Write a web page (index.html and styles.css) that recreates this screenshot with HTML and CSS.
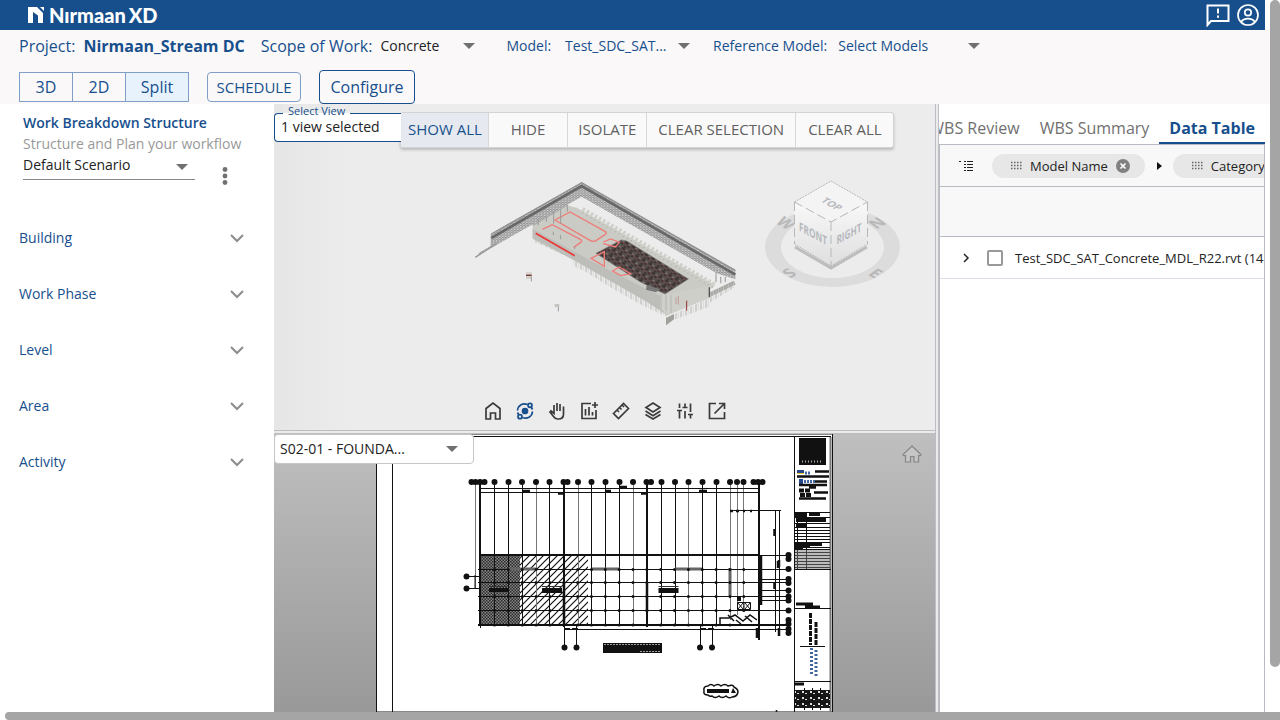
FILE: index.html
```html
<!DOCTYPE html>
<html lang="en">
<head>
<meta charset="utf-8">
<title>NirmaanXD</title>
<link rel="stylesheet" href="styles.css">
</head>
<body>
<div class="app">
  <div class="page">
    <header class="topbar">
      <div class="brand">
        <svg width="16" height="16" viewBox="0 0 16 16" aria-hidden="true"><path fill="#fff" d="M0 0h9l6 6v10h-5V8.500L5 5V16H0zM12 0h4v4z"/></svg>
        <span class="brand-name">Nırmaan<span class="brand-xd">XD</span></span>
      </div>
      <div class="top-actions">
        <button class="icon-btn" aria-label="Feedback"><svg width="24" height="24" viewBox="0 0 24 24" fill="none" stroke="#fff" stroke-width="2"><path d="M1.500 22V2.500h21V18H5z"/><path d="M12 5.500v5M12 12.500v2.200"/></svg></button>
        <button class="icon-btn" aria-label="Account"><svg width="24" height="24" viewBox="0 0 24 24" fill="none" stroke="#fff" stroke-width="1.700"><circle cx="12" cy="12" r="10"/><circle cx="12" cy="9.500" r="3.200"/><path d="M5 19c3-4.500 11-4.500 14 0"/></svg></button>
      </div>
    </header>

    <section class="subbar">
      <div class="info-row">
        <span class="big">Project:</span><strong class="project">Nirmaan_Stream DC</strong>
        <label class="big" for="scope">Scope of Work:</label>
        <span class="pick scope"><select id="scope"><option>Concrete</option></select></span>
        <label class="model-label" for="model">Model:</label>
        <span class="pick model"><select id="model"><option>Test_SDC_SAT...</option></select></span>
        <label class="ref-label" for="ref">Reference Model:</label>
        <span class="pick ref"><select id="ref"><option>Select Models</option></select></span>
      </div>
      <div class="mode-row">
        <div class="modes"><button>3D</button><button>2D</button><button class="on">Split</button></div>
        <button class="schedule">SCHEDULE</button>
        <button class="configure">Configure</button>
      </div>
    </section>

    <main class="work">
      <aside class="side">
        <h1>Work Breakdown Structure</h1>
        <p>Structure and Plan your workflow</p>
        <div class="scenario-row">
          <span class="pick scenario"><select aria-label="Scenario"><option>Default Scenario</option></select></span>
          <button class="icon-btn" aria-label="More"><svg width="8" height="20" viewBox="0 0 8 20" fill="#707070"><circle cx="4" cy="3.500" r="2.400"/><circle cx="4" cy="10" r="2.400"/><circle cx="4" cy="16.500" r="2.400"/></svg></button>
        </div>
        <nav class="groups">
          <button>Building<svg class="chev" viewBox="0 0 14 8"><path d="M1 1l6 6 6-6"/></svg></button>
          <button>Work Phase<svg class="chev" viewBox="0 0 14 8"><path d="M1 1l6 6 6-6"/></svg></button>
          <button>Level<svg class="chev" viewBox="0 0 14 8"><path d="M1 1l6 6 6-6"/></svg></button>
          <button>Area<svg class="chev" viewBox="0 0 14 8"><path d="M1 1l6 6 6-6"/></svg></button>
          <button>Activity<svg class="chev" viewBox="0 0 14 8"><path d="M1 1l6 6 6-6"/></svg></button>
        </nav>
      </aside>

      <div class="viewers">
        <section class="view3d">
          <svg class="scene" viewBox="274 104 661 326" preserveAspectRatio="xMidYMid meet" role="img" aria-label="3D model">
            <defs>
              <pattern id="truss" width="9" height="7" patternUnits="userSpaceOnUse"><rect width="9" height="7" fill="#b9b9b9"/><path d="M0 1h5M5 4.500h4" stroke="#777" stroke-width="2"/><path d="M0 5h3" stroke="#e4e4e4" stroke-width="2"/></pattern>
              <pattern id="piles" width="15" height="40" patternUnits="userSpaceOnUse"><path d="M3 0v40" stroke="#b3b3b0" stroke-width="3"/><path d="M10 0v40" stroke="#d2d2cf" stroke-width="2"/></pattern>
              <pattern id="rebar" width="23" height="19" patternUnits="userSpaceOnUse" patternTransform="rotate(30)"><rect width="23" height="19" fill="#58504e"/><path d="M1 4h10M13 11h7M4 16h6" stroke="#332a2a" stroke-width="5"/><path d="M13 4h6" stroke="#8d8682" stroke-width="3"/><path d="M3 11h5M18 6v5" stroke="#8f3836" stroke-width="2"/></pattern>
              <linearGradient id="face" x1="0" y1="0" x2="0" y2="1"><stop offset="0" stop-color="#f9f9f9"/><stop offset="1" stop-color="#dedede"/></linearGradient>
              <filter id="soft"><feGaussianBlur stdDeviation="0.700"/></filter>
            </defs>
            <g transform="translate(460 160) scale(.33333)">
              <path fill="url(#piles)" d="M222 225L340 290 560 410 620 440V470L545 435 465 390 372 332 340 318V298L222 245z"/>
              <path fill="#cbcbc6" d="M218 195L320 135 350 143 765 375 748 390 748 412 622 466 560 420 345 292 218 232z"/>
              <path fill="#bdbdb9" d="M218 206L345 276 400 306 600 408 622 424V466L560 425 345 302 218 236z"/>
              <path fill="#cfcfca" d="M600 408L748 378V414L622 466 600 445z"/>
              <path d="M218 196L320 135" stroke="#aaa" stroke-width="5"/>
              <path d="M366 150L765 378" stroke="#d0d0ca" stroke-width="19" stroke-dasharray="8 6"/>
              <path d="M366 158L765 386" stroke="#b2b2ae" stroke-width="4" stroke-dasharray="4 10"/>
              <path fill="url(#rebar)" stroke="#777" stroke-width="2" d="M408 280L484 240 500 243 685 357 615 402 540 365z"/>
              <path d="M560 375l40 12-12 10-30-8z" fill="#777"/>
              <path fill="url(#truss)" d="M92 222L365 67 826 330V358L770 340 365 110 100 260 46 292 60 277 92 258z"/>
              <path d="M94 234L365 78 826 344" fill="none" stroke="#686868" stroke-width="8"/>
              <path d="M94 222L365 68 826 331" fill="none" stroke="#929292" stroke-width="4"/>
              <path d="M46 292L110 250" stroke="#999" stroke-width="4"/>
              <path d="M768 340V366M782 350V370M796 350V366" stroke="#aaa" stroke-width="4"/>
              <path d="M750 404L824 368" stroke="#a8a8a4" stroke-width="13"/>
              <path fill="url(#piles)" d="M750 395L824 365V382L750 428zM600 405h36v55l-36-15z"/>
              <path d="M618 474L748 414V440L640 480 618 496z" fill="url(#piles)"/>
              <path d="M618 474l24-12v16l-24 18z" fill="#a0a09c"/>
              <g fill="none" stroke="#ee7c77" stroke-width="4">
                <path d="M285 180L330 156 435 214q8 5 0 10L408 242q-8 5-18-1z"/>
                <path d="M247 208l30-14 84 44q8 5 0 10l-20 14M430 246l22-9 26 10-12 14-36-10M393 295l40-20v44zM458 333l20-12 34 20-30 6z"/>
              </g>
              <path d="M227 220L344 287" stroke="#ee3533" stroke-width="5"/>
              <path d="M235 178v18M259 170v15M281 155v36M302 148v44M322 135v20M302 225v13M280 215v10M344 260v8" stroke="#999" stroke-width="3"/>
              <path d="M680 422v30" stroke="#90302f" stroke-width="3"/><path d="M648 412v20M655 408v26" stroke="#b88480" stroke-width="2"/>
              <path d="M748 382v30" stroke="#555" stroke-width="4"/>
              <path d="M198 337h18v20h-18z" fill="#d4d0ca"/><path d="M198 346h17" stroke="#703a38" stroke-width="4"/><path d="M214 350v14M295 436v18" stroke="#999" stroke-width="3"/><path d="M284 432h14v9h-14z" fill="#c5c5c2"/>
            </g>
            <g>
              <path filter="url(#soft)" fill="#dcdcdc" fill-rule="evenodd" d="M765 247a67.500 40 0 1 0 135 0a67.500 40 0 1 0-135 0zM781 247a51.500 31 0 1 0 103 0a51.500 31 0 1 0-103 0z"/>
              <g class="compass" text-anchor="middle"><text transform="matrix(.7 .4 -.7 .5 786 223)" y="7">W</text><text transform="matrix(.7 -.4 .7 .5 877 223)" y="7">N</text><text transform="matrix(.7 -.4 .7 .5 789 273)" y="7">S</text><text transform="matrix(.7 .4 -.7 .5 876 273)" y="7">E</text></g>
              <path d="M795 247L831 268 867 247" fill="none" stroke="#bdbdbd" stroke-width="3"/>
              <path d="M794.500 202L831 222V266L794.500 244z" fill="url(#face)"/><path d="M867.500 202L831 222V266L867.500 244z" fill="url(#face)"/><path d="M794.500 202L831 181 867.500 202 831 222z" fill="#f4f4f4"/>
              <g fill="none" stroke="#b5b7b9"><path stroke-dasharray="9 4" d="M794.500 202L831 222 867.500 202M794.500 202V244M867.500 202V244M831 222V266"/><path stroke-dasharray="2 1" d="M794.500 202L831 181 867.500 202M794.500 244L831 266 867.500 244"/></g>
              <g class="cube"><text transform="matrix(.75 .4 0 1.100 813 238)" text-anchor="middle">FRONT</text><text transform="matrix(.75 -.4 0 1.100 849 238)" text-anchor="middle">RIGHT</text><text transform="matrix(.8 .45 -.75 .5 829 206)" text-anchor="middle">TOP</text></g>
            </g>
          </svg>
          <div class="view-controls">
            <div class="view-select"><label for="view">Select View</label><input id="view" value="1 view selected" readonly></div>
            <div class="actions"><button class="on">SHOW ALL</button><button>HIDE</button><button>ISOLATE</button><button>CLEAR SELECTION</button><button>CLEAR ALL</button></div>
          </div>
          <div class="tools">
            <button aria-label="Home"><svg viewBox="0 0 24 24"><path d="M5 20V9.500l7-5.500 7 5.500V20h-4.500v-6h-5v6z"/></svg></button>
            <button class="on" aria-label="Orbit"><svg viewBox="0 0 24 24"><circle cx="12" cy="12" r="2.500" fill="currentColor"/><path d="M4.500 11.500C5 6 10 3.500 14.500 5.500M19.500 12.500C19 18 14 20.500 9.500 18.500M18.500 8.500l1 2M5.500 15.500l-1-2"/><circle cx="17" cy="6.300" r="2"/><circle cx="7" cy="17.700" r="2"/></svg></button>
            <button aria-label="Pan"><svg viewBox="0 0 24 24"><path d="M9 13V6M12 12V4M15 12V5M18.500 7.500V15c0 3-2 5-5 5h-1c-2 0-3-1-4-2.500L5 13l1-1 3 2.500V12"/></svg></button>
            <button aria-label="Add chart"><svg viewBox="0 0 24 24"><path d="M14 4.500H5v15h14V11M8.500 10v6.500M12 8v8.500M15.500 13v3.500M18 3v6M15 6h6"/></svg></button>
            <button aria-label="Measure"><svg viewBox="0 0 24 24"><path d="M4.500 14.500l10-10 5 5-10 10zM8 11l2 2M10.500 8.500l2 2M13 6l2 2"/></svg></button>
            <button aria-label="Layers"><svg viewBox="0 0 24 24"><path d="M12 4l7 4.500-7 4.500-7-4.500zM4.500 12l7.500 4.700 7.500-4.700M4.500 15.500L12 20l7.500-4.500"/></svg></button>
            <button aria-label="Settings"><svg viewBox="0 0 24 24"><path d="M6.500 4.500V9M4 11.500h5M6.500 11.500v8M12 4.500v4M9.500 8.500h5M12 12v7.500M17.500 4.500V13M15 15.500h5M17.500 15.500v4"/></svg></button>
            <button aria-label="Open in new"><svg viewBox="0 0 24 24"><path d="M11 4.500H4.500v15h15V13M14 4.500h5.500V10M19.500 4.500L9.500 14.500"/></svg></button>
          </div>
        </section>
        <div class="split-h"></div>
        <section class="view2d">
          <svg class="scene" viewBox="274 434 661 278" preserveAspectRatio="xMidYMid slice" role="img" aria-label="Foundation plan sheet">
            <defs>
              <pattern id="dense" width="3" height="3" patternUnits="userSpaceOnUse"><rect width="3" height="3" fill="#868686"/><path d="M0 0h1.500v1.500H0zM1.500 1.500H3V3H1.500z" fill="#2a2a2a"/></pattern>
              <pattern id="diag" width="7" height="7" patternUnits="userSpaceOnUse"><path d="M-1 8L8-1M-1 1L1-1M6 8L8 6" stroke="#111" stroke-width="1.200"/></pattern>
              <pattern id="keys" width="8" height="6" patternUnits="userSpaceOnUse"><rect width="8" height="6" fill="#181818"/><path d="M2 1h2v2H2zM5 3h2v1H5z" fill="#ddd"/></pattern>
            </defs>
            <path d="M376.500 434V712H832.500V434z" fill="#fff" stroke="#111"/>
            <path d="M392.500 712V436.500H831" fill="none" stroke="#111"/><path d="M830.500 437V712" stroke="#777" stroke-width="2"/>
            <path fill="url(#dense)" d="M480 555h40v70h-40z"/><path fill="url(#diag)" d="M520 555h68v70h-68z"/>
            <g stroke="#111" fill="none">
              <path d="M480.500 482V628M494.500 482V626M508.500 482V626M522.500 482V626M549.500 482V626M591.500 482V626M605.500 482V626M619.500 482V626M661.500 482V626M675.500 482V626M702.500 482V626M716.500 482V626"/>
              <path stroke="#777" d="M475.500 482V588M536.500 482V626M578.500 482V626M633.500 482V626M688.500 482V626M730.500 482V620M737.500 482V615M743.500 482V610"/>
              <path stroke-width="2" d="M480 484V625M564 482V627M647 482V627M480 555H759M478 625H786M759 484V640"/>
              <path d="M480 488.500H758M480 492.500H758M478 569.500H786M478 582.500H786M478 596.500H786M478 610.500H786M759 555.500H786M759 579.500H786M759 590.500H786M759 600.500H786M564 629.500H786"/>
              <path d="M730 510.500H781M775.500 510V632M779.500 510V636M466 576.500H480M466 588.500H480M475 575V589M564.500 625V648M576.500 625V648M700.500 625V648M712.500 625V648"/>
              <path stroke-width="2" d="M564 629h13v-3M700 629h13v-3M759 515V555" stroke-dasharray="6 2"/>
              <path stroke-width="2" d="M478 625H560M620 625H700" stroke-dasharray="5 2 2 1"/>
              <path stroke-width="3" stroke="#666" d="M508 569H536M592 569H620M675 569H702M730 568V597"/>
              <path stroke-width="2.500" d="M564 582V626M647 582V612M757 628V638M761 556V605M779 628V636M779 560V567"/>
              <path stroke-width="1.500" d="M720 624v-6h9l6-3 8 6 7-6 7 5M728 615l6 6M736 620l5 4M745 616l7 6"/>
              <path d="M737.500 602.500h13v7h-13zM744 603v7M738 609l5-6M745 609l5-6M738 603l5 6M745 603l5 6"/><path stroke-width="4" d="M737 599h4"/>
            </g>
            <path class="knots" d="M494.500 569.500H745M494.500 582.500H745M494.500 596.500H745M494.500 610.500H745M494.500 625H730"/>
            <path class="bubbles" d="M471.500 482h.01M475.500 482h.01M480 482h.01M484.500 482h.01M494.500 482h.01M508.500 482h.01M522 482h.01M536 482h.01M549.500 482h.01M563.500 482h.01M567.500 482h.01M578 482h.01M591.500 482h.01M605.500 482h.01M619.500 482h.01M633 482h.01M646.500 482h.01M651 482h.01M661.500 482h.01M675 482h.01M688.500 482h.01M702.500 482h.01M716.500 482h.01M730 482h.01M737 482h.01M743.500 482h.01M753.500 482h.01M758 482h.01M762.500 482h.01M788.500 555h.01M788.500 559h.01M788.500 569h.01M788.500 579h.01M788.500 583h.01M788.500 590.500h.01M788.500 596.500h.01M788.500 600.500h.01M788.500 610.500h.01M788.500 620h.01M788.500 624h.01M788.500 629h.01M788.500 633h.01M466.500 576.500h.01M466.500 588.500h.01M564.500 647.500h.01M576.500 647.500h.01M700 647.500h.01M712 647.500h.01"/>
            <path stroke="#111" stroke-width="2.500" d="M522 491h8M558 493.500h5M605 491h6M619 487h8M641 493.500h6M699 491h8M730 511h3M736 511h3M743 511h2M750 511h2M774.500 529v7M774.500 582v7M778 561v7"/>
            <g fill="#111"><path d="M489 588h20v4h-20zM542 588h20v5h-20zM658.500 588h20v5h-20zM603 643h59v10h-59z"/></g>
            <path d="M542 586.500h20M658.500 586.500h20M489 586.500h18" stroke="#333"/>
            <path d="M604 644.500h57M640 651.500h20" stroke="#fff" stroke-dasharray="2 1" stroke-width=".6"/>
            <path d="M708 695q-5 0-4-4-1-5 4-5 3-3 6 0 4-3 7 0 4-3 7 0 5-2 6 1 4 2 4 5-1 5-6 5-3 2-6-1-4 3-7 0-4 3-7 0-2 1-4-1z" fill="#fff" stroke="#111" stroke-width="1.500"/><path d="M707 689h22v4h-22zM731 693l2-5 3 5z" fill="#111"/>
            <path d="M776.500 711h.01" class="bubbles small"/>

            <path d="M794.500 437V712M794 569.500h37M794 608.500h37M794 681.500h37M800 646.500h25" stroke="#111" fill="none"/>
            <path fill="#111" d="M799 438h27v27h-27z"/><path stroke="#aaa" stroke-dasharray="1 2" stroke-width="2" d="M802 461.500h21"/>
            <path fill="#23468c" d="M797 470h7v4h-7zM799 479h4v5h-4z"/><path fill="#e8c82e" d="M797 473h7v1h-7z"/><path stroke="#4569a5" stroke-width="3" stroke-dasharray="2 1" d="M805 473h6M804 481.500h11"/>
            <path stroke="#111" stroke-width="2.500" d="M815 471.500h14M797 476.500h32M815 481.500h12M799 485h28M809 487.500h7M814 492.500h14M799 498.500h27"/>
            <path stroke="#111" stroke-width="4" stroke-dasharray="5 1" d="M799 490.500h12M800 495h11"/>
            <path stroke="#111" stroke-width="4" d="M795 515h12M809 514h11M796 520h30M796 525h10M795 545h15M806 544h16M795 548h8"/>
            <path stroke="#111" stroke-width="1" d="M795 512.500h35M795 517.500h35M795 523.500h35M795 527.500h35M795 530.500h35M795 533.500h35M795 536.500h35M795 539.500h35M795 542.500h35M795 547.500h35M795 549.500h35M795 552.500h35M795 555.500h35M795 558.500h35M795 561.500h35M795 564.500h35M795 567.500h35M797.500 513v56M806.500 513v56"/>
            <path fill="#777" opacity=".5" d="M795 550h35v19h-35z"/>
            <path stroke="#111" stroke-width="3" d="M796 604h17M805 607h15"/>
            <path stroke="#111" stroke-width="3" stroke-dasharray="5 1" d="M810.500 613v32M816 622v23"/>
            <path stroke="#41659d" stroke-width="3" stroke-dasharray="2 2" d="M811.500 648v28M816 650v26"/>
            <path stroke="#111" stroke-width="3" d="M795 684h9"/><path fill="url(#keys)" d="M795 690h35v18h-35z"/><path stroke="#111" stroke-width="1" d="M804.500 688v22M812.500 688v22M820.500 688v22M795 696.500h35M795 702.500h35"/>
          </svg>
          <span class="pick sheet"><select aria-label="Sheet"><option>S02-01 - FOUNDA...</option></select></span>
          <button class="icon-btn sheet-home" aria-label="Fit sheet"><svg width="22" height="20" viewBox="0 0 22 20"><path d="M11 2l9 8.500q0 1.500-2.500 1V18H13v-5.500H9.500V18h-5v-6.500Q1.500 12 2 10.500z" fill="#c6c6c6" stroke="#858585" stroke-width="1.200"/></svg></button>
        </section>
      </div>

      <div class="split-v"></div>

      <aside class="data">
        <div class="tabs" role="tablist"><button role="tab">WBS Review</button><button role="tab">WBS Summary</button><button role="tab" class="on" aria-selected="true">Data Table</button></div>
        <div class="grid-box">
          <div class="group-bar">
            <svg class="tree" width="14" height="12" viewBox="0 0 14 12"><path d="M0 1.500h3M5 1.500h9M5 4.500h9M5 7.500h9M5 10.500h9" stroke="#222" fill="none" stroke-dasharray="2 1 8 0"/></svg>
            <span class="chip"><svg width="12" height="10" viewBox="0 0 12 10"><path d="M1 1.500h11M1 4.500h11M1 7.500h11" stroke="#666" stroke-width="1.500" stroke-dasharray="1.500 1.500"/></svg><span>Model Name</span><button class="icon-btn" aria-label="Remove Model Name"><svg width="14" height="14" viewBox="0 0 14 14"><circle cx="7" cy="7" r="7" fill="#808080"/><path d="M4.500 4.500l5 5M9.500 4.500l-5 5" stroke="#fff" stroke-width="1.600"/></svg></button></span>
            <svg class="next" width="5" height="8" viewBox="0 0 5 8"><path d="M0 0l5 4-5 4z" fill="#111"/></svg>
            <span class="chip"><svg width="12" height="10" viewBox="0 0 12 10"><path d="M1 1.500h11M1 4.500h11M1 7.500h11" stroke="#666" stroke-width="1.500" stroke-dasharray="1.500 1.500"/></svg><span>Category</span></span>
          </div>
          <table>
            <thead><tr><th scope="col" aria-label="Group"></th></tr></thead>
            <tbody><tr><td><div class="row-cell"><button class="icon-btn" aria-label="Expand"><svg width="8" height="10" viewBox="0 0 8 10"><path d="M2 1l4 4-4 4" fill="none" stroke="#222" stroke-width="1.500"/></svg></button><input type="checkbox" id="r1"><label for="r1">Test_SDC_SAT_Concrete_MDL_R22.rvt (14</label></div></td></tr></tbody>
          </table>
        </div>
      </aside>
    </main>
  </div>
  <div class="bar-v"></div>
  <div class="bar-h"></div>
</div>
</body>
</html>
```
FILE: styles.css
```css
* { box-sizing: border-box; }
body { margin: 0; background: #fff; color: #222; font: 14px/20px "Open Sans", "Noto Sans", sans-serif; overflow: hidden; }
button, select, input { font: inherit; color: inherit; margin: 0; }
button { padding: 0; border: 0; background: none; white-space: nowrap; }
svg { display: block; flex: none; }
.icon-btn { display: flex; align-items: center; justify-content: center; }

.app { display: grid; grid-template-columns: minmax(0, 1fr) 10px; grid-template-rows: minmax(0, 1fr) 8px; height: 100vh; }
.page { display: flex; flex-direction: column; min-height: 0; }
.bar-v { background: #a5a5a5; border-radius: 5px; margin-bottom: 45px; }
.bar-h { grid-column: 1 / -1; margin-left: 5px; background: #a5a5a5; border-radius: 5px 0 0 5px; }

.topbar { display: flex; align-items: center; justify-content: space-between; flex: none; height: 30px; margin-right: 5px; padding: 0 5px 0 28px; background: #174f8d; color: #fff; }
.brand { display: flex; align-items: center; gap: 5px; }
.brand-name { font: 900 20px/24px Lato, sans-serif; }
.brand-xd { margin-left: 3px; }
.top-actions { display: flex; gap: 6px; }

.subbar { flex: none; height: 74px; padding-top: 4px; background: #faf8f9; color: #174f8d; }
.info-row { display: flex; align-items: center; height: 24px; padding-left: 19px; white-space: nowrap; }
.big, .project { font-size: 16px; }
.project { margin: 0 16px 0 8px; }
.pick { position: relative; display: block; }
.pick select { display: block; width: 100%; height: 24px; padding: 0; border: 0; outline: 0; background: transparent; appearance: none; }
.pick::after { content: ""; position: absolute; right: 7px; top: 50%; margin-top: -3px; border: 6px solid transparent; border-top-color: #707070; border-bottom: 0; pointer-events: none; }
.scope { width: 102px; margin-left: 8px; color: #222; }
.model-label { margin-left: 24px; }
.model { width: 132px; margin-left: 14px; }
.ref-label { margin-left: 16px; }
.ref { width: 149px; margin-left: 11px; }
.mode-row { display: flex; align-items: center; height: 34px; margin-top: 12px; padding-left: 19px; font-size: 16px; }
.modes { display: flex; }
.modes button { width: 54px; height: 30px; margin-right: -1px; border: 1px solid #7f9fc8; }
.modes .on { width: 64px; margin: 0; background: #e8f2fd; }
.schedule { width: 94px; height: 30px; margin: 0 18px; border: 1px solid #7f9fc8; border-radius: 4px; font-size: 15px; }
.configure { width: 96px; height: 34px; border: 1px solid #174f8d; border-radius: 4px; }

.work { display: grid; flex: 1; min-height: 0; margin-right: 5px; grid-template-columns: 274px minmax(0, 661fr) 4px minmax(0, 326fr); }
.side { padding-top: 8px; }
.side h1 { margin: 0 0 0 23px; font-size: 14px; line-height: 22px; font-weight: 600; color: #174f8d; }
.side p { margin: 0 0 0 23px; line-height: 20px; color: #999; }
.scenario-row { display: flex; align-items: flex-start; margin-left: 23px; }
.scenario { width: 172px; border-bottom: 1px solid #8a8a8a; }
.scenario select { height: 25px; padding-bottom: 4px; }
.scenario-row .icon-btn { margin: 12px 0 0 26px; }
.groups { margin-top: 24px; color: #174f8d; }
.groups button { display: flex; align-items: center; justify-content: space-between; width: 100%; height: 56px; padding: 0 30px 0 19px; }
.chev { width: 14px; height: 8px; fill: none; stroke: #8c8c8c; stroke-width: 2; overflow: visible; }

.viewers { display: grid; grid-template-rows: minmax(0, 326fr) 4px minmax(0, 278fr); min-height: 0; }
.view3d { position: relative; background: linear-gradient(90deg, #e6e6e6, #ececec 12%); }
.view2d { position: relative; overflow: hidden; background: linear-gradient(#bfbfbf, #999); }
.scene { position: absolute; inset: 0; width: 100%; height: 100%; }
.split-h { background: #ebebeb; border: solid #bdbdc0; border-width: 1px 0; }
.split-v { background: #ebebeb; border: solid #bdbdc6; border-width: 0 1px; }
.view-controls { position: relative; display: flex; padding-top: 8px; }
.view-select { position: relative; width: 127px; height: 29px; margin-top: 1px; }
.view-select input { width: 100%; height: 29px; padding: 0 6px 2px; border: 1px solid #174f8d; border-right: 0; border-radius: 4px 0 0 4px; background: #fff; outline: 0; }
.view-select label { position: absolute; left: 9px; top: -8px; padding: 0 5px; font-size: 11px; line-height: 12px; color: #174f8d; background: linear-gradient(#eaeaea 8px, #fff 8px); }
.actions { display: flex; height: 36px; margin-left: -1px; border: 1px solid #d3d3d3; border-radius: 3px; background: #f9f9f9; box-shadow: 0 2px 3px #bbb; color: #606060; font-size: 15px; }
.actions button { padding: 0 11px 2px; border-right: 1px solid #d8d8d8; }
.actions button:nth-child(2) { padding: 0 22px 2px; }
.actions button:nth-child(3) { padding: 0 10px 2px; }
.actions button:last-child { padding-left: 12px; border: 0; }
.actions .on { padding: 0 6px 2px 7px; background: #e6eaf0; color: #174f8d; }
.tools { position: absolute; left: 50%; bottom: 7px; display: flex; gap: 8px; transform: translateX(-50%); color: #3b3b3b; }
.tools svg { width: 24px; height: 24px; fill: none; stroke: currentColor; stroke-width: 1.7; }
.tools .on { color: #174f8d; }
.compass { font: bold 19px "Open Sans", sans-serif; fill: #b8b8b8; }
.cube { font: bold 11px "Open Sans", sans-serif; fill: #b5b8bd; }
.knots { fill: none; stroke: #111; stroke-width: 3; stroke-linecap: round; stroke-dasharray: 0 13.85; }
.bubbles { fill: none; stroke: #111; stroke-width: 6; stroke-linecap: round; }
.small { stroke-width: 2; }
.sheet { width: 200px; padding-left: 5px; border: 1px solid #c6c6c6; border-radius: 4px; background: #fff; }
.sheet select { height: 28px; }
.sheet::after { right: 15px; }
.sheet-home { position: absolute; right: 12px; top: 10px; }

.data { display: flex; flex-direction: column; min-width: 0; overflow: hidden; }
.tabs { display: flex; flex: none; justify-content: flex-end; height: 40px; overflow: hidden; font-size: 16px; color: #707070; }
.tabs button { flex: none; padding: 10px 10px 0; border-bottom: 2px solid transparent; }
.tabs .on { font-weight: 700; color: #174f8d; border-color: #174f8d; }
.grid-box { flex: 1; min-height: 0; border: 1px solid #b8bac4; border-bottom: 0; overflow: hidden; font-size: 13px; }
.group-bar { display: flex; align-items: center; height: 42px; padding-left: 19px; border-bottom: 1px solid #b8bac4; background: #f8f8f8; }
.tree { margin-right: 19px; }
.chip { display: flex; flex: none; align-items: center; gap: 8px; height: 24px; padding: 0 15px 0 18px; border-radius: 12px; background: #e7e7e7; color: #222; }
.next { margin: 0 11px 0 12px; }
table { width: 100%; border-collapse: collapse; table-layout: fixed; }
th { height: 49px; padding: 0; background: #f8f8f8; border-bottom: 1px solid #b8bac4; }
td { height: 42px; padding: 2px 0 0; border-bottom: 1px solid #dcdde6; }
.row-cell { display: flex; align-items: center; padding-left: 22px; white-space: nowrap; overflow: hidden; }
.row-cell input { flex: none; width: 16px; height: 16px; margin: 0 12px 0 17px; border: 2px solid #999; border-radius: 2px; background: #fff; appearance: none; }
```
